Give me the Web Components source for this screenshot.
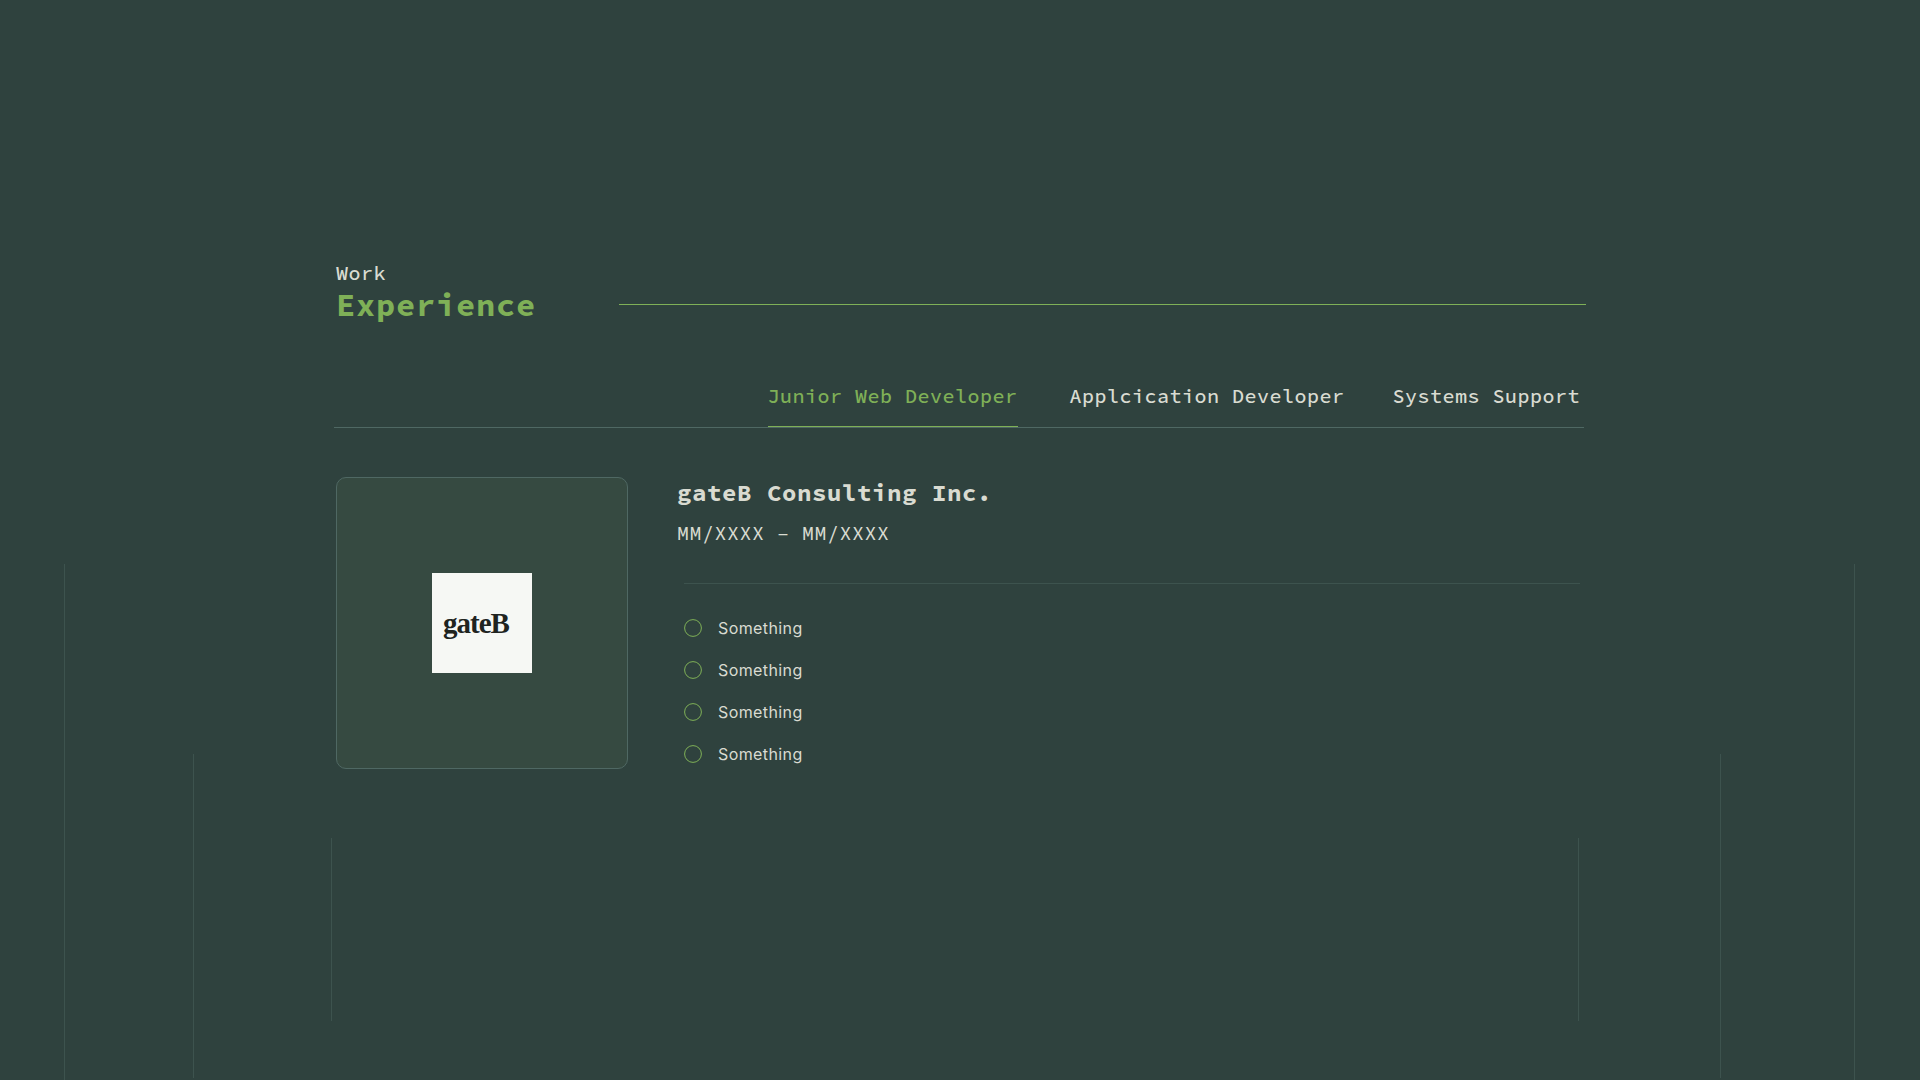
<!DOCTYPE html>
<html lang="en">
<head>
<meta charset="utf-8">
<meta name="viewport" content="width=device-width, initial-scale=1">
<title>Work Experience</title>
<style>
:root {
  --bg: #2f423e;
  --panel: #364a41;
  --edge: #4f6863;
  --rule: #3d534e;
  --accent: #7fb057;
  --text: #d9dbd1;
  --tracking: 0.025em;
  --mono: "Source Code Pro", "Noto Sans Mono", "Liberation Mono", monospace;
  --sans: Inter, "Liberation Sans", sans-serif;
}
body { margin: 0; background: var(--bg); color: var(--text); font-family: var(--mono); }
</style>
</head>
<body>
<work-page>
  <rail-backdrop slot="backdrop"></rail-backdrop>
  <section-heading><span slot="eyebrow">Work</span>Experience</section-heading>
  <job-tabs>
    <job-tab selected>Junior Web Developer</job-tab>
    <job-tab>Applcication Developer</job-tab>
    <job-tab>Systems Support</job-tab>
  </job-tabs>
  <job-panel>
    <company-logo slot="logo">gateB</company-logo>
    <span slot="company">gateB Consulting Inc.</span>
    <span slot="dates">MM/XXXX – MM/XXXX</span>
    <job-duty>Something</job-duty>
    <job-duty>Something</job-duty>
    <job-duty>Something</job-duty>
    <job-duty>Something</job-duty>
  </job-panel>
</work-page>
<script>
function define(name, html, setup) {
  const template = document.createElement('template');
  template.innerHTML = html;
  customElements.define(name, class extends HTMLElement {
    constructor() {
      super();
      this.attachShadow({ mode: 'open' }).append(template.content.cloneNode(true));
    }
    connectedCallback() { if (setup) setup(this); }
  });
}

define('work-page', `
  <style>
    :host { display: grid; min-height: 100vh; }
    main { grid-area: 1 / 1; box-sizing: border-box; width: 100%; max-width: 1252px; margin: 0 auto; padding: 260px 0 0; }
    ::slotted([slot=backdrop]) { grid-area: 1 / 1; }
  </style>
  <slot name="backdrop"></slot>
  <main><slot></slot></main>`);

define('rail-backdrop', `
  <style>
    :host { display: flex; justify-content: space-between; padding: 0 65px 0 64px; }
    div { display: flex; align-items: flex-end; }
    .left { gap: 128px; }
    .left i:last-child { margin-left: 9px; }
    .right { gap: 133px; }
    .right i:first-child { margin-right: 8px; }
    i { width: 1px; background: var(--rule); }
    .long { height: 516px; }
    .mid { height: 324px; margin-bottom: 2px; }
    .short { height: 183px; margin-bottom: 59px; }
  </style>
  <div class="left"><i class="long"></i><i class="mid"></i><i class="short"></i></div>
  <div class="right"><i class="short"></i><i class="mid"></i><i class="long"></i></div>`);

define('section-heading', `
  <style>
    :host { display: grid; grid-template-columns: 283px 1fr; align-items: center; padding-left: 2px; }
    h2 { margin: 0; color: var(--accent); font-size: 32px; line-height: 38px; font-weight: 700; letter-spacing: var(--tracking); }
    .eyebrow { display: block; color: var(--text); font-size: 20px; line-height: 26px; font-weight: 550; letter-spacing: var(--tracking); }
    hr { width: 100%; height: 1px; margin: 24px 0 0; border: 0; background: var(--accent); }
  </style>
  <h2><span class="eyebrow"><slot name="eyebrow"></slot></span><slot></slot></h2>
  <hr>`);

define('job-tabs', `
  <style>
    :host { display: block; margin-top: 56px; }
    nav { display: flex; justify-content: flex-end; gap: 48px; margin-right: 2px; padding-right: 4px; border-bottom: 1px solid var(--edge); }
  </style>
  <nav role="tablist"><slot></slot></nav>`);

define('job-tab', `
  <style>
    :host { display: block; }
    :host([selected]) { margin-right: 4px; }
    button { display: block; padding: 0 0 14px; border: 0; border-bottom: 1px solid transparent; background: none;
      color: var(--text); font: 550 20px/32px var(--mono); letter-spacing: var(--tracking); cursor: pointer; white-space: nowrap; }
    :host([selected]) button { color: var(--accent); border-bottom-color: var(--accent); }
  </style>
  <button type="button" role="tab"><slot></slot></button>`, host => {
  const button = host.shadowRoot.querySelector('button');
  button.setAttribute('aria-selected', host.hasAttribute('selected'));
  button.onclick = () => {
    for (const tab of host.parentElement.children) {
      tab.toggleAttribute('selected', tab === host);
      tab.shadowRoot.querySelector('button').setAttribute('aria-selected', tab === host);
    }
  };
});

define('job-panel', `
  <style>
    :host { display: flex; align-items: flex-start; gap: 49px; margin-top: 49px; padding-left: 2px; }
    article { flex: 1; min-width: 0; }
    h3 { margin: 0; font-size: 24px; line-height: 32px; font-weight: 700; letter-spacing: var(--tracking); }
    p { margin: 10px 0 0; font-size: 20px; line-height: 28px; font-weight: 400; letter-spacing: var(--tracking); }
    ul { margin: 36px 6px 0 7px; padding: 32px 0 0; border-top: 1px solid var(--rule); display: grid; gap: 18px; list-style: none; }
  </style>
  <slot name="logo"></slot>
  <article>
    <h3><slot name="company"></slot></h3>
    <p><slot name="dates"></slot></p>
    <ul role="list"><slot></slot></ul>
  </article>`);

define('company-logo', `
  <style>
    :host { display: grid; place-items: center; box-sizing: border-box; width: 292px; height: 292px;
      border: 1px solid var(--edge); border-radius: 10px; background: var(--panel); }
    div { box-sizing: border-box; width: 100px; height: 100px; padding-left: 11px; background: #f6f8f4; color: #20241f;
      font: 700 29px/100px "Source Serif Pro", "Liberation Serif", serif; letter-spacing: -1px; }
  </style>
  <div><slot></slot></div>`);

define('job-duty', `
  <style>
    :host { display: flex; align-items: center; gap: 16px; font: 400 16px/24px var(--sans); letter-spacing: var(--tracking); }
    svg { display: block; width: 18px; height: 18px; fill: none; stroke: var(--accent); }
  </style>
  <svg viewBox="0 0 18 18" aria-hidden="true"><circle cx="9" cy="9" r="8.4"/></svg>
  <span><slot></slot></span>`, host => host.setAttribute('role', 'listitem'));
</script>
</body>
</html>
